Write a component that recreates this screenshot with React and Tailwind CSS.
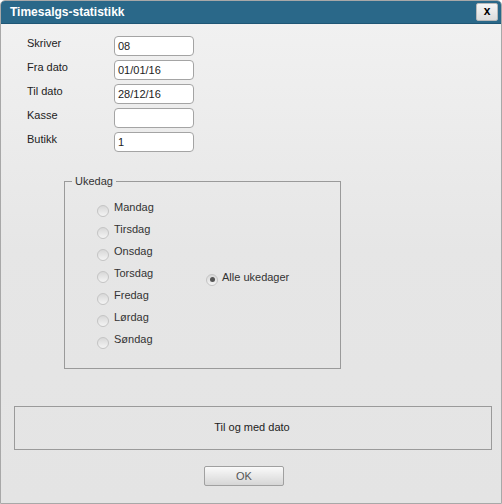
import React from "react";

const fields = [
  { label: "Skriver", value: "08" },
  { label: "Fra dato", value: "01/01/16" },
  { label: "Til dato", value: "28/12/16" },
  { label: "Kasse", value: "" },
  { label: "Butikk", value: "1" },
];

const days = ["Mandag", "Tirsdag", "Onsdag", "Torsdag", "Fredag", "Lørdag", "Søndag"];

const Radio = ({ checked }) => (
  <span className="w-[12px] h-[12px] shrink-0 rounded-full border border-[#c4c4c4] bg-gradient-to-b from-[#d8d8d8] to-[#f4f4f4] flex items-center justify-center">
    {checked && <span className="w-[5px] h-[5px] rounded-full bg-[#555]" />}
  </span>
);

const App = () => {
  return (
    <div className="w-[502px] h-[504px] font-['Liberation_Sans',Arial,sans-serif] text-[11px] text-[#222]">
      <div className="w-full h-full flex flex-col border border-[#a8a8a8] rounded-t-[5px] overflow-hidden bg-gradient-to-b from-[#f2f2f2] via-[#e6e6e6] to-[#e4e4e4]">
        {/* title bar */}
        <div className="h-[23px] shrink-0 bg-[#2a6889] border-b border-[#1f5675] flex items-center justify-between pl-[9px] pr-[3px]">
          <span className="text-white font-bold text-[12px] leading-none">Timesalgs-statistikk</span>
          <button className="w-[22px] h-[18px] bg-gradient-to-b from-[#f6f6f6] to-[#dcdcdc] border border-[#b8b8b8] rounded-[2px] text-[12px] font-bold text-black leading-none flex items-center justify-center pb-[2px]">
            x
          </button>
        </div>

        {/* form fields */}
        <div className="pt-[12px] pl-[26px] flex flex-col">
          {fields.map((f) => (
            <div key={f.label} className="h-[24px] flex items-start">
              <span className="w-[87px] pt-[1px] leading-[13px]">{f.label}</span>
              <div className="w-[80px] h-[20px] bg-white border border-[#a4a4a4] rounded-[4px] pl-[3px] flex items-center leading-none pt-[1px]">
                {f.value}
              </div>
            </div>
          ))}
        </div>

        {/* weekday fieldset */}
        <fieldset className="ml-[63px] mt-[19px] w-[277px] h-[194px] border border-[#9a9a9a]">
          <legend className="ml-[7px] px-[3px] leading-[13px] text-[#333]">Ukedag</legend>
          <div className="flex items-center pl-[32px] pt-[13px]">
            <div className="w-[109px] flex flex-col">
              {days.map((d) => (
                <div key={d} className="h-[22px] flex items-start gap-[5px]">
                  <span className="mt-[4px]">
                    <Radio />
                  </span>
                  <span className="leading-[13px] text-[#333]">{d}</span>
                </div>
              ))}
            </div>
            <div className="flex items-start gap-[4px]">
              <span className="mt-[3px]">
                <Radio checked />
              </span>
              <span className="leading-[13px] text-[#333]">Alle ukedager</span>
            </div>
          </div>
        </fieldset>

        {/* info box */}
        <div className="mt-[37px] ml-[13px] w-[478px] h-[44px] border border-[#9a9a9a] flex items-center justify-center">
          <span className="pb-[2px] pr-[2px]">Til og med dato</span>
        </div>

        {/* OK */}
        <div className="mt-[16px] pl-[203px] flex">
          <button className="w-[80px] h-[20px] bg-gradient-to-b from-[#fafafa] to-[#d6d6d6] border border-[#a0a0a0] rounded-[2px] text-[#555] leading-none">
            OK
          </button>
        </div>
      </div>
    </div>
  );
};

export default App;
